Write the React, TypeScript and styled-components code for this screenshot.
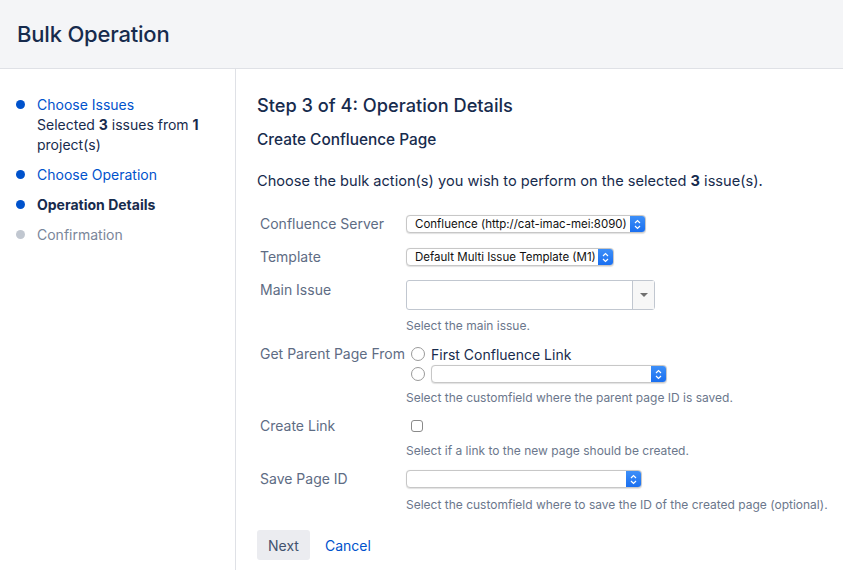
import styled, { createGlobalStyle } from "styled-components";

const GlobalStyle = createGlobalStyle`
  html, body {
    margin: 0;
    padding: 0;
    background: #ffffff;
    font-family: Inter, "Noto Sans", "Liberation Sans", sans-serif;
    color: #172b4d;
  }
`;

const Header = styled.header`
  height: 68px;
  background-color: #f4f5f7;
  border-bottom: 1px solid #dfe1e6;
  display: flex;
  align-items: center;
  padding-left: 17px;
`;

const Title = styled.h1`
  margin: 0;
  font-size: 22px;
  font-weight: 500;
  color: #172b4d;
  letter-spacing: -0.2px;
`;

const Body = styled.div`
  display: grid;
  grid-template-columns: 236px 1fr;
  min-height: 501px;
`;

const Sidebar = styled.nav`
  border-right: 1px solid #dfe1e6;
  padding: 26px 0 0 16px;
  display: flex;
  flex-direction: column;
  gap: 10px;
`;

const StepItem = styled.div`
  display: grid;
  grid-template-columns: 21px 1fr;
  font-size: 14px;
  line-height: 20px;
`;

const Dot = styled.span<{ $done: boolean }>`
  width: 9px;
  height: 9px;
  border-radius: 50%;
  margin-top: 5px;
  background-color: ${(p) => (p.$done ? "#0052cc" : "#c1c7d0")};
`;

const StepLink = styled.a`
  color: #0052cc;
  text-decoration: none;
`;

const StepText = styled.span<{ $state: "current" | "todo" }>`
  color: ${(p) => (p.$state === "current" ? "#172b4d" : "#7a869a")};
  font-weight: ${(p) => (p.$state === "current" ? 700 : 400)};
`;

const Main = styled.main`
  padding: 21px 0 0 21px;
`;

const StepTitle = styled.h2`
  margin: 0;
  font-size: 18.2px;
  font-weight: 500;
  line-height: 30px;
  color: #172b4d;
`;

const SubTitle = styled.h3`
  margin: 8px 0 0;
  font-size: 15.4px;
  font-weight: 500;
  line-height: 24px;
  color: #172b4d;
`;

const Intro = styled.p`
  margin: 19px 0 0;
  font-size: 14.6px;
  line-height: 20px;
  color: #172b4d;
`;

const Form = styled.div`
  margin-top: 23px;
  display: grid;
  grid-template-columns: 149px 1fr;
  row-gap: 13px;
  font-size: 14px;
`;

const Label = styled.div`
  padding-left: 3px;
  color: #5e6c84;
  line-height: 20px;
`;

const Field = styled.div`
  display: flex;
  flex-direction: column;
  align-items: flex-start;
`;

const Line = styled.div`
  height: 20px;
  display: flex;
  align-items: center;
`;

const Description = styled.div<{ $gap?: number }>`
  font-size: 12px;
  line-height: 16px;
  color: #6b778c;
  margin-top: ${(p) => p.$gap ?? 8}px;
  margin-bottom: -3px;
`;

const MacSelect = styled.div<{ $w: number }>`
  width: ${(p) => p.$w}px;
  height: 18px;
  box-sizing: border-box;
  border: 1px solid #c7c7c7;
  border-radius: 4px;
  display: flex;
  align-items: center;
  background: #fff;
  box-shadow: 0 0.5px 1px rgba(0, 0, 0, 0.12);
  overflow: hidden;
  font-size: 11.5px;
  color: #111;
`;

const SelectValue = styled.span`
  flex: 1;
  padding-left: 8px;
  white-space: nowrap;
`;

const Stepper = styled.span`
  width: 15px;
  height: 100%;
  background: linear-gradient(#3d8ff8, #1a6ff0);
  display: flex;
  align-items: center;
  justify-content: center;
`;

const ComboBox = styled.div`
  width: 249px;
  height: 30px;
  box-sizing: border-box;
  border: 1px solid #c1c7d0;
  border-radius: 3px;
  display: flex;
`;

const ComboInput = styled.div`
  flex: 1;
`;

const ComboButton = styled.div`
  width: 21px;
  border-left: 1px solid #c1c7d0;
  background: #f7f7f7;
  display: flex;
  align-items: center;
  justify-content: center;
`;

const Caret = styled.span`
  width: 0;
  height: 0;
  border-left: 4px solid transparent;
  border-right: 4px solid transparent;
  border-top: 4px solid #707070;
`;

const OptionRow = styled.div`
  display: flex;
  align-items: center;
  gap: 6px;
  height: 20px;
  padding-left: 5px;
`;

const Radio = styled.span`
  width: 14px;
  height: 14px;
  box-sizing: border-box;
  border: 1px solid #9a9a9a;
  border-radius: 50%;
  background: #fff;
`;

const OptionText = styled.span`
  font-size: 14px;
  color: #172b4d;
`;

const Checkbox = styled.span`
  width: 12px;
  height: 12px;
  box-sizing: border-box;
  border: 1px solid #8a8a8a;
  border-radius: 3px;
  margin-left: 5px;
  background: #fff;
`;

const Actions = styled.div`
  margin-top: 20px;
  display: flex;
  align-items: center;
  gap: 15px;
`;

const Button = styled.button`
  height: 30px;
  padding: 0 11px;
  border: none;
  border-radius: 3px;
  background: #ebecf0;
  color: #42526e;
  font-family: inherit;
  font-size: 14px;
`;

const LinkButton = styled.a`
  color: #0052cc;
  font-size: 14px;
  text-decoration: none;
`;

function Chevrons() {
  return (
    <svg width="7" height="11" viewBox="0 0 7 11">
      <path d="M1 4 L3.5 1.5 L6 4 M1 7 L3.5 9.5 L6 7" fill="none" stroke="#fff" strokeWidth="1.2" />
    </svg>
  );
}

function Select({ width, value }: { width: number; value?: string }) {
  return (
    <MacSelect $w={width}>
      <SelectValue>{value}</SelectValue>
      <Stepper>
        <Chevrons />
      </Stepper>
    </MacSelect>
  );
}

export default function App() {
  return (
    <>
      <GlobalStyle />
      <Header>
        <Title>Bulk Operation</Title>
      </Header>
      <Body>
        <Sidebar>
          <StepItem>
            <Dot $done />
            <div>
              <StepLink href="#">Choose Issues</StepLink>
              <div>
                Selected <b>3</b> issues from <b>1</b> project(s)
              </div>
            </div>
          </StepItem>
          <StepItem>
            <Dot $done />
            <StepLink href="#">Choose Operation</StepLink>
          </StepItem>
          <StepItem>
            <Dot $done />
            <StepText $state="current">Operation Details</StepText>
          </StepItem>
          <StepItem>
            <Dot $done={false} />
            <StepText $state="todo">Confirmation</StepText>
          </StepItem>
        </Sidebar>
        <Main>
          <StepTitle>Step 3 of 4: Operation Details</StepTitle>
          <SubTitle>Create Confluence Page</SubTitle>
          <Intro>
            Choose the bulk action(s) you wish to perform on the selected <b>3</b> issue(s).
          </Intro>
          <Form>
            <Label>Confluence Server</Label>
            <Field>
              <Line>
                <Select width={240} value="Confluence (http://cat-imac-mei:8090)" />
              </Line>
            </Field>

            <Label>Template</Label>
            <Field>
              <Line>
                <Select width={208} value="Default Multi Issue Template (M1)" />
              </Line>
            </Field>

            <Label>Main Issue</Label>
            <Field>
              <ComboBox>
                <ComboInput />
                <ComboButton>
                  <Caret />
                </ComboButton>
              </ComboBox>
              <Description>Select the main issue.</Description>
            </Field>

            <Label>Get Parent Page From</Label>
            <Field>
              <OptionRow>
                <Radio />
                <OptionText>First Confluence Link</OptionText>
              </OptionRow>
              <OptionRow>
                <Radio />
                <Select width={236} />
              </OptionRow>
              <Description $gap={6}>Select the customfield where the parent page ID is saved.</Description>
            </Field>

            <Label>Create Link</Label>
            <Field>
              <Line>
                <Checkbox />
              </Line>
              <Description $gap={7}>Select if a link to the new page should be created.</Description>
            </Field>

            <Label>Save Page ID</Label>
            <Field>
              <Line>
                <Select width={236} />
              </Line>
              <Description>Select the customfield where to save the ID of the created page (optional).</Description>
            </Field>
          </Form>
          <Actions>
            <Button>Next</Button>
            <LinkButton href="#">Cancel</LinkButton>
          </Actions>
        </Main>
      </Body>
    </>
  );
}
